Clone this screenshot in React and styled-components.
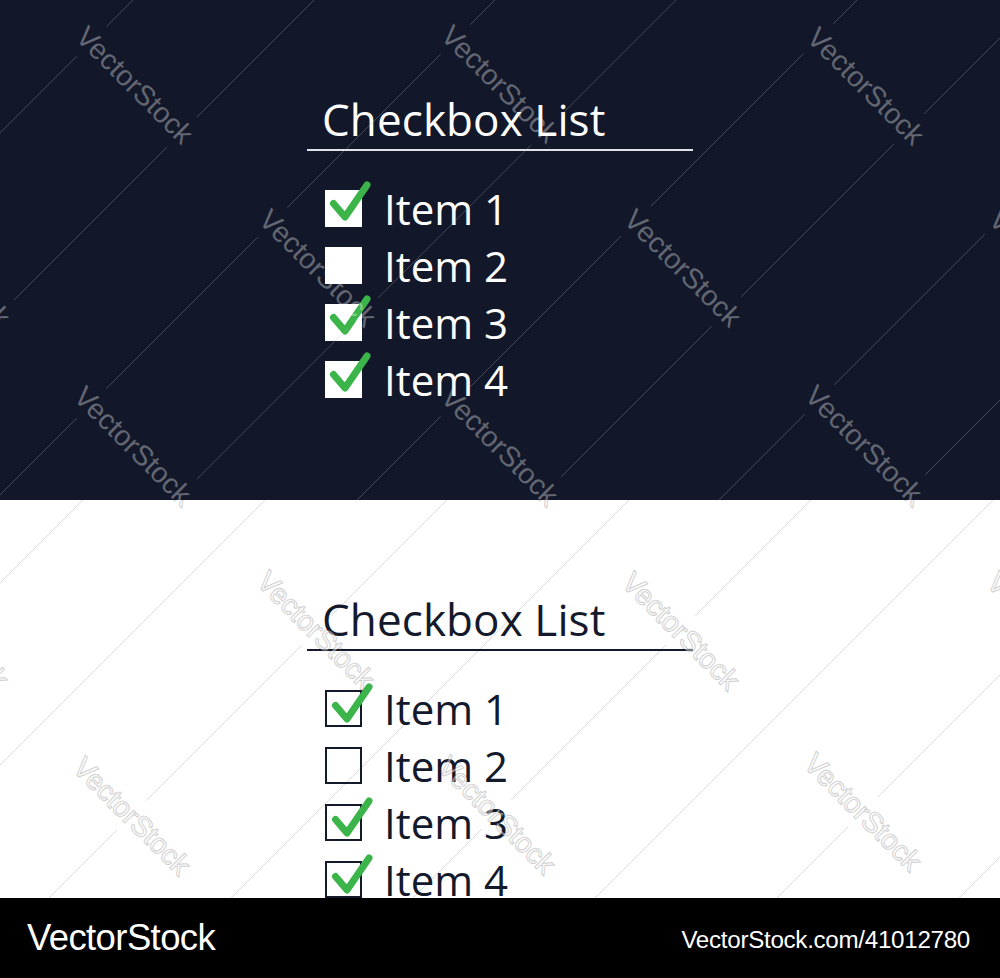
import React from "react";
import styled, { createGlobalStyle } from "styled-components";

const GlobalStyle = createGlobalStyle`
  html, body { margin: 0; padding: 0; background: #ffffff; }
  * { box-sizing: border-box; }
`;

const TONES = {
  dark: {
    bg: "#121829",
    ink: "#ffffff",
    rule: "#e2e3e6",
    boxFill: "#ffffff",
    boxBorder: "none",
    line: "rgba(170,175,185,0.32)",
    markFill: "rgba(255,255,255,0.34)",
    markStroke: "none",
  },
  light: {
    bg: "#ffffff",
    ink: "#141a2b",
    rule: "#141a2b",
    boxFill: "#ffffff",
    boxBorder: "2px solid #141a2b",
    line: "rgba(0,0,0,0.14)",
    markFill: "rgba(255,255,255,0.45)",
    markStroke: "rgba(0,0,0,0.22)",
  },
};

const Page = styled.div`
  display: flex;
  flex-direction: column;
  width: 100%;
  font-family: "Open Sans", "Noto Sans", sans-serif;
`;

const Panel = styled.section`
  position: relative;
  overflow: hidden;
  height: ${(p) => p.$height}px;
  background: ${(p) => TONES[p.$tone].bg};
  color: ${(p) => TONES[p.$tone].ink};
  padding: 93px 0 0 307px;
`;

const Card = styled.div`
  width: 386px;
`;

const Heading = styled.h2`
  margin: 0;
  padding: 0 0 4px 15px;
  font-size: 44px;
  line-height: 52px;
  font-weight: 400;
  letter-spacing: 0.1px;
  border-bottom: 2px solid ${(p) => TONES[p.$tone].rule};
`;

const List = styled.ul`
  list-style: none;
  margin: 0;
  padding: 39px 0 0 18px;
  display: flex;
  flex-direction: column;
  gap: 20px;
`;

const Row = styled.li`
  display: flex;
  align-items: center;
  gap: 22px;
  height: 37px;
`;

const Box = styled.span`
  position: relative;
  flex: none;
  width: 37px;
  height: 37px;
  background: ${(p) => TONES[p.$tone].boxFill};
  border: ${(p) => TONES[p.$tone].boxBorder};
`;

const Tick = styled.svg`
  position: absolute;
  left: -4px;
  top: -10px;
  width: 52px;
  height: 50px;
  overflow: visible;
`;

const Label = styled.span`
  font-size: 42px;
  line-height: 37px;
  white-space: nowrap;
`;

const Overlay = styled.svg`
  position: absolute;
  inset: 0;
  width: 100%;
  height: 100%;
  pointer-events: none;
`;

const Footer = styled.footer`
  display: flex;
  align-items: center;
  justify-content: space-between;
  height: 80px;
  padding: 0 30px 0 27px;
  background: #000000;
  color: #ffffff;
  font-family: "Liberation Sans", Arial, sans-serif;
`;

const Brand = styled.span`
  font-size: 36.5px;
  letter-spacing: -0.6px;
`;

const Reference = styled.span`
  font-size: 24.2px;
  letter-spacing: -0.3px;
  margin-top: 4px;
`;

const ITEMS = [
  { label: "Item 1", checked: true },
  { label: "Item 2", checked: false },
  { label: "Item 3", checked: true },
  { label: "Item 4", checked: true },
];

// Stock-preview watermark: diagonal hairlines plus rotated brand text.
const MARKS = {
  dark: {
    lines: { start: 133, step: 181 },
    spots: [
      [135, 85], [500, 84], [866, 86],
      [-48, 268], [318, 268], [683, 268], [1048, 268],
      [133, 445], [500, 446], [864, 444],
    ],
  },
  light: {
    lines: { start: 37, step: 182 },
    spots: [
      [135, 447], [500, 447], [866, 447],
      [-50, 630], [316, 630], [681, 631], [1046, 631],
      [132, 816], [497, 815], [863, 812],
    ],
  },
};

function Watermark({ tone, top, height }) {
  const { lines, spots } = MARKS[tone];
  const t = TONES[tone];
  const cs = [];
  for (let c = lines.start; c < 2200; c += lines.step) cs.push(c);
  const maskId = `wm-gap-${tone}`;
  return (
    <Overlay viewBox={`0 ${top} 1000 ${height}`} preserveAspectRatio="xMinYMin slice">
      <defs>
        <mask id={maskId} maskUnits="userSpaceOnUse" x="-500" y="-500" width="2500" height="2500">
          <rect x="-500" y="-500" width="2500" height="2500" fill="#fff" />
          {spots.map(([x, y]) => (
            <rect
              key={`${x}-${y}`}
              x={x - 84}
              y={y - 21}
              width="168"
              height="42"
              fill="#000"
              transform={`rotate(45 ${x} ${y})`}
            />
          ))}
        </mask>
      </defs>
      <g mask={`url(#${maskId})`} stroke={t.line} strokeWidth="1">
        {cs.map((c) => (
          <line key={c} x1={c + 200} y1={-200} x2={c - 1400} y2={1400} />
        ))}
      </g>
      {spots.map(([x, y]) => (
        <text
          key={`t-${x}-${y}`}
          x={x}
          y={y}
          textAnchor="middle"
          dominantBaseline="central"
          transform={`rotate(45 ${x} ${y})`}
          fontFamily="'Liberation Sans', Arial, sans-serif"
          fontSize="28.5"
          fill={t.markFill}
          stroke={t.markStroke}
          strokeWidth={t.markStroke === "none" ? 0 : 1.3}
          paintOrder="stroke"
        >
          VectorStock
        </text>
      ))}
    </Overlay>
  );
}

function CheckboxCard({ tone }) {
  return (
    <Card>
      <Heading $tone={tone}>Checkbox List</Heading>
      <List>
        {ITEMS.map((item) => (
          <Row key={item.label}>
            <Box $tone={tone}>
              {item.checked && (
                <Tick viewBox="-4 -10 52 50">
                  <path
                    d="M8.5 13.5 L20 27 L42 -5"
                    fill="none"
                    stroke="#3bb54a"
                    strokeWidth="7"
                    strokeLinecap="round"
                    strokeLinejoin="round"
                  />
                </Tick>
              )}
            </Box>
            <Label>{item.label}</Label>
          </Row>
        ))}
      </List>
    </Card>
  );
}

export default function App() {
  return (
    <>
      <GlobalStyle />
      <Page>
        <Panel $tone="dark" $height={500}>
          <CheckboxCard tone="dark" />
          <Watermark tone="dark" top={0} height={500} />
        </Panel>
        <Panel $tone="light" $height={398}>
          <CheckboxCard tone="light" />
          <Watermark tone="light" top={500} height={398} />
        </Panel>
        <Footer>
          <Brand>VectorStock</Brand>
          <Reference>VectorStock.com/41012780</Reference>
        </Footer>
      </Page>
    </>
  );
}
